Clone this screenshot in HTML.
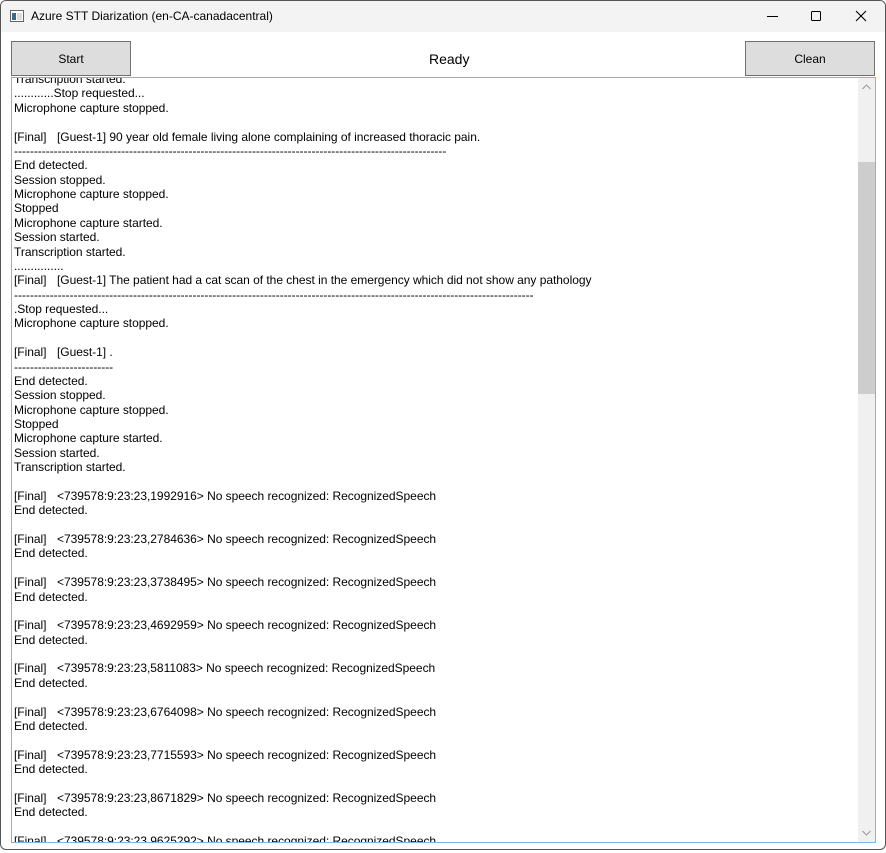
<!DOCTYPE html>
<html><head><meta charset="utf-8"><style>
*{margin:0;padding:0;box-sizing:border-box}
body{width:886px;height:853px;overflow:hidden;background:#fff;font-family:"Liberation Sans",sans-serif;position:relative}
.win{position:absolute;left:0;top:0;width:886px;height:850px;border:1px solid #555;border-radius:6px;background:#fff;overflow:hidden}
.title{position:absolute;left:0;top:0;width:884px;height:31px;background:#f3f3f3}
.title .t{position:absolute;left:30px;top:8px;font-size:12px;color:#000}
.btn{position:absolute;top:40px;height:35px;background:#dddddd;border:1px solid #707070;font-size:12px;text-align:center;line-height:35px;color:#000}
.status{position:absolute;left:428px;top:50px;font-size:14px}
.box{position:absolute;left:10px;top:76px;width:865px;height:766px;border:1px solid #7eb4ea;overflow:hidden}
.txt{position:absolute;left:2px;top:-6px;font-size:12px;line-height:14.38px;color:#000;white-space:pre;letter-spacing:-0.03px}
.f{display:inline-block;width:43px}
.sb{position:absolute;right:0;top:0;width:17px;height:764px;background:#f0f0f0}
.thumb{position:absolute;left:0;top:84px;width:17px;height:232px;background:#cdcdcd}
</style></head><body>
<div class="win">
<div class="title">
<svg style="position:absolute;left:9px;top:9px" width="14" height="12"><rect x="0.5" y="0.5" width="13" height="11" fill="#fff" stroke="#666"/><rect x="2" y="3" width="4" height="7" fill="#3a6a8a"/><rect x="7" y="3" width="5" height="7" fill="#ddd"/></svg>
<div class="t">Azure STT Diarization (en-CA-canadacentral)</div>
<svg style="position:absolute;left:763px;top:7px" width="110" height="16"><line x1="3" y1="8.5" x2="14" y2="8.5" stroke="#000"/><rect x="47.5" y="3.5" width="9" height="9" fill="none" stroke="#000" rx="1"/><path d="M92 3L102 13M102 3L92 13" stroke="#000" stroke-width="1.1"/></svg>
</div>
<div class="btn" style="left:10px;width:120px">Start</div>
<div class="status">Ready</div>
<div class="btn" style="left:744px;width:130px">Clean</div>
<div class="box">
<div class="txt">Transcription started.
............Stop requested...
Microphone capture stopped.

<span class="f">[Final]</span>[Guest-1] 90 year old female living alone complaining of increased thoracic pain.
-------------------------------------------------------------------------------------------------------------
End detected.
Session stopped.
Microphone capture stopped.
Stopped
Microphone capture started.
Session started.
Transcription started.
...............
<span class="f">[Final]</span>[Guest-1] The patient had a cat scan of the chest in the emergency which did not show any pathology
-----------------------------------------------------------------------------------------------------------------------------------
.Stop requested...
Microphone capture stopped.

<span class="f">[Final]</span>[Guest-1] .
-------------------------
End detected.
Session stopped.
Microphone capture stopped.
Stopped
Microphone capture started.
Session started.
Transcription started.

<span class="f">[Final]</span>&lt;739578:9:23:23,1992916&gt; No speech recognized: RecognizedSpeech
End detected.

<span class="f">[Final]</span>&lt;739578:9:23:23,2784636&gt; No speech recognized: RecognizedSpeech
End detected.

<span class="f">[Final]</span>&lt;739578:9:23:23,3738495&gt; No speech recognized: RecognizedSpeech
End detected.

<span class="f">[Final]</span>&lt;739578:9:23:23,4692959&gt; No speech recognized: RecognizedSpeech
End detected.

<span class="f">[Final]</span>&lt;739578:9:23:23,5811083&gt; No speech recognized: RecognizedSpeech
End detected.

<span class="f">[Final]</span>&lt;739578:9:23:23,6764098&gt; No speech recognized: RecognizedSpeech
End detected.

<span class="f">[Final]</span>&lt;739578:9:23:23,7715593&gt; No speech recognized: RecognizedSpeech
End detected.

<span class="f">[Final]</span>&lt;739578:9:23:23,8671829&gt; No speech recognized: RecognizedSpeech
End detected.

<span class="f">[Final]</span>&lt;739578:9:23:23,9625292&gt; No speech recognized: RecognizedSpeech</div>
<div class="sb"><div class="thumb"></div>
<svg style="position:absolute;left:4px;top:6px" width="9" height="6"><path d="M0.5 5L4.5 1L8.5 5" fill="none" stroke="#999"/></svg>
<svg style="position:absolute;left:4px;top:752px" width="9" height="6"><path d="M0.5 1L4.5 5L8.5 1" fill="none" stroke="#999"/></svg>
</div>
</div>
</div>
</body></html>
